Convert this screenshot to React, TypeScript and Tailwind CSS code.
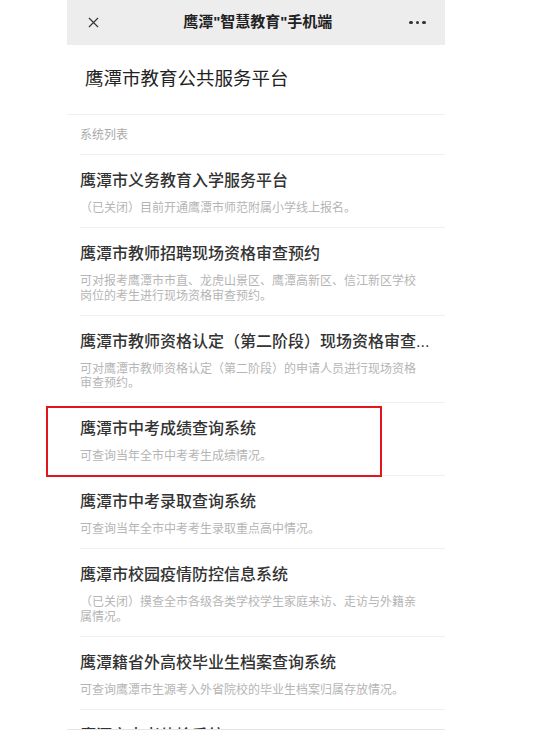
import { X } from 'lucide-react'

const systems = [
  {
    title: '鹰潭市义务教育入学服务平台',
    desc: '（已关闭）目前开通鹰潭市师范附属小学线上报名。',
  },
  {
    title: '鹰潭市教师招聘现场资格审查预约',
    desc: '可对报考鹰潭市市直、龙虎山景区、鹰潭高新区、信江新区学校岗位的考生进行现场资格审查预约。',
  },
  {
    title: '鹰潭市教师资格认定（第二阶段）现场资格审查...',
    desc: '可对鹰潭市教师资格认定（第二阶段）的申请人员进行现场资格审查预约。',
  },
  {
    title: '鹰潭市中考成绩查询系统',
    desc: '可查询当年全市中考考生成绩情况。',
    marked: true,
  },
  {
    title: '鹰潭市中考录取查询系统',
    desc: '可查询当年全市中考考生录取重点高中情况。',
  },
  {
    title: '鹰潭市校园疫情防控信息系统',
    desc: '（已关闭）摸查全市各级各类学校学生家庭来访、走访与外籍亲属情况。',
  },
  {
    title: '鹰潭籍省外高校毕业生档案查询系统',
    desc: '可查询鹰潭市生源考入外省院校的毕业生档案归属存放情况。',
  },
  {
    title: '鹰潭市中考体检系统',
    desc: '可查询当年全市中考考生体检情况。',
  },
]

export default function App() {
  return (
    <div className="h-[731px] overflow-hidden bg-white font-['Liberation_Sans','Noto_Sans_CJK_SC',sans-serif]">
      <div className="ml-[67px] w-[378px] h-[730px] overflow-x-visible overflow-y-clip border-b border-[#e5e5e5]">
        {/* 顶部栏 */}
        <div className="h-[45px] bg-[#ededed] flex items-center justify-between px-[18px]">
          <X size={17} strokeWidth={1.6} className="text-[#333]" />
          <span className="text-[15px] font-bold text-[#222] ml-[4px]">鹰潭"智慧教育"手机端</span>
          <div className="flex gap-[3px] mr-[1px]">
            <span className="w-[3.5px] h-[3.5px] rounded-full bg-[#333]" />
            <span className="w-[3.5px] h-[3.5px] rounded-full bg-[#333]" />
            <span className="w-[3.5px] h-[3.5px] rounded-full bg-[#333]" />
          </div>
        </div>

        {/* 标题 */}
        <div className="h-[70px] flex items-center pl-[18px] border-b border-[#efefef]">
          <h1 className="text-[18.5px] text-[#222] leading-none">鹰潭市教育公共服务平台</h1>
        </div>

        {/* 系统列表 */}
        <div className="pl-[13px]">
          <div className="h-[40px] flex items-center border-b border-[#efefef]">
            <span className="text-[12px] text-[#aaa]">系统列表</span>
          </div>
          {systems.map((s) => (
            <div key={s.title} className="relative border-b border-[#efefef] pt-[15px] pb-[11.5px] pr-[21px]">
              {s.marked && (
                <div className="absolute left-[-34px] top-[3px] w-[336px] h-[71px] border-2 border-[#e3151d]" />
              )}
              <div className="text-[16px] leading-[22px] font-medium text-[#333] whitespace-nowrap">{s.title}</div>
              <p className="mt-[9px] text-[12px] leading-[14.5px] text-[#b5b5b5]">{s.desc}</p>
            </div>
          ))}
        </div>
      </div>
    </div>
  )
}
